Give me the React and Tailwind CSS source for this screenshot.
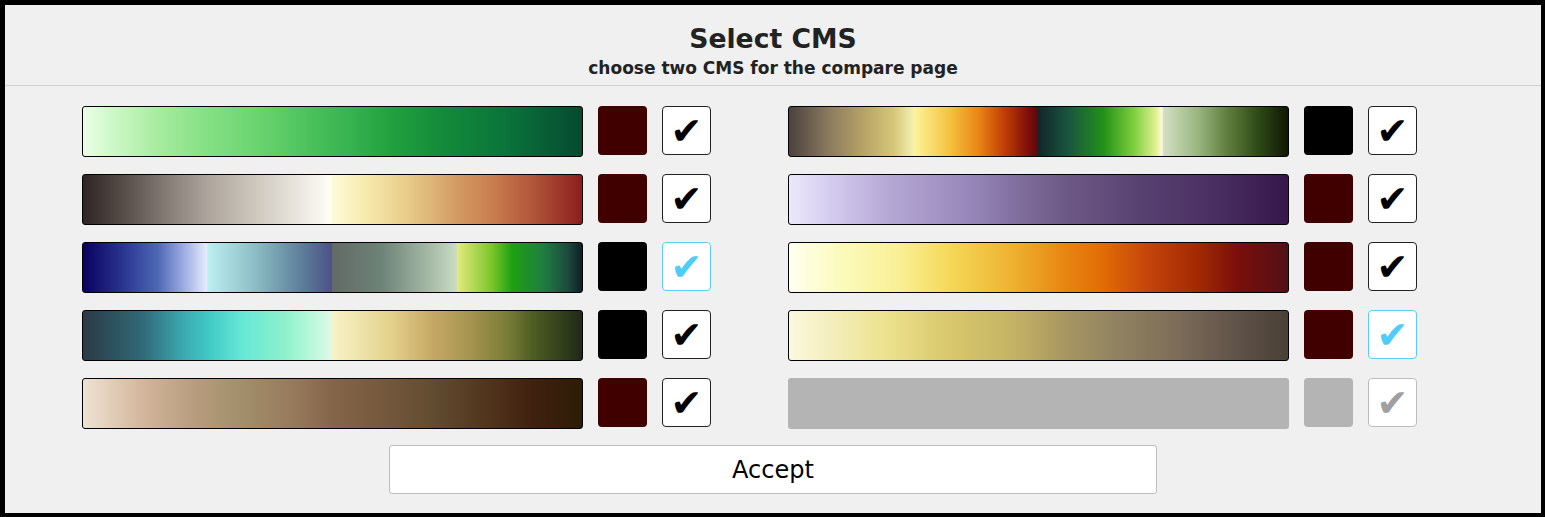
import React from 'react'

const FONT = { fontFamily: '"DejaVu Sans", "Liberation Sans", sans-serif' }

// left column, top to bottom
const LEFT = [
  {
    bar: 'bg-[linear-gradient(to_right,#ebffe6_0%,#d2f9cd_5%,#a7ec9f_15%,#84e085_25%,#6ad46f_35%,#4cc25d_45%,#33b04d_55%,#22a03f_62%,#138b3b_72%,#0a733b_85%,#064a30_100%)]',
    swatch: 'bg-[#400000]', state: 'on',
  },
  {
    bar: 'bg-[linear-gradient(to_right,#2e2624_0%,#564c48_8%,#8a827b_18%,#ada59c_25%,#cfc9bf_35%,#e9e6df_43%,#fffdf5_49.5%,#fffbd7_50%,#f4e6a6_58%,#e6c785_66%,#d39a63_75%,#c97e4f_82%,#b2563b_90%,#8c1e1e_100%)]',
    swatch: 'bg-[#400000]', state: 'on',
  },
  {
    bar: 'bg-[linear-gradient(to_right,#0a0060_0%,#2a3590_8%,#4e67b5_15%,#a9b7ea_21%,#e6ecfb_24.8%,#bceff0_25%,#8fc0c8_34%,#5d7d98_44%,#4c5288_49.8%,#636a66_50%,#6d8478_60%,#aabda9_70%,#c8dbc3_74.8%,#e2ea7c_75%,#7ac52a_82%,#1fa011_86%,#1e8040_92%,#1c4c40_97%,#0f1f22_100%)]',
    swatch: 'bg-black', state: 'focus',
  },
  {
    bar: 'bg-[linear-gradient(to_right,#2a3a45_0%,#306a78_12%,#3aa8b0_20%,#40c8c5_25%,#66e8d6_32%,#8cf0cc_40%,#b0f8d8_45%,#def9e8_49.8%,#f7f3c7_50%,#e3d08a_62%,#c7a865_70%,#a3924f_78%,#7a7c38_85%,#4e5e22_90%,#1f2a18_100%)]',
    swatch: 'bg-black', state: 'on',
  },
  {
    bar: 'bg-[linear-gradient(to_right,#eee3d3_0%,#d3b69b_12%,#b89d7f_22%,#a5926d_30%,#977a5c_42%,#85654a_50%,#75593d_60%,#624c30_70%,#4f331c_82%,#412010_90%,#2d1c05_100%)]',
    swatch: 'bg-[#400000]', state: 'on',
  },
]

// right column, top to bottom
const RIGHT = [
  {
    bar: 'bg-[linear-gradient(to_right,#4b423e_0%,#8b7a60_8%,#b7a367_15%,#d5c77a_21%,#f3eeb0_24.8%,#fbf59b_25%,#f5c442_32%,#e98614_38%,#c23f05_43%,#7e0e0b_48%,#5a0a0a_49.8%,#12262a_50%,#1a5540_56%,#239019_63%,#7dcd3c_69%,#e0f08e_73.5%,#fdfbe0_74.8%,#d2e0c4_75%,#9ab57f_82%,#5e7d3c_88%,#2f4a17_94%,#0f1704_100%)]',
    swatch: 'bg-black', state: 'on',
  },
  {
    bar: 'bg-[linear-gradient(to_right,#ebe8fa_0%,#d5cdef_8%,#b5a8d5_20%,#9a89bc_35%,#8270a0_45%,#6e5a86_55%,#584272_70%,#4a3062_85%,#37164b_100%)]',
    swatch: 'bg-[#400000]', state: 'on',
  },
  {
    bar: 'bg-[linear-gradient(to_right,#fffff0_0%,#fbfbbe_10%,#f9f095_22%,#f5d95a_32%,#eeb12f_45%,#e88711_55%,#e26b05_63%,#c4440a_72%,#a12a03_82%,#7a0e0b_90%,#511117_100%)]',
    swatch: 'bg-[#400000]', state: 'on',
  },
  {
    bar: 'bg-[linear-gradient(to_right,#fbf8de_0%,#ebe18c_20%,#d9c86c_32%,#c4b364_45%,#a99762_55%,#928461_65%,#7c6c58_78%,#5f5248_90%,#4a4036_100%)]',
    swatch: 'bg-[#400000]', state: 'focus',
  },
  { bar: null, swatch: 'bg-[#b4b4b4]', state: 'disabled' },
]

function CheckBox({ state }) {
  const box =
    state === 'focus'    ? 'border-[#5ccbf5] text-[#4fcdf9]' :
    state === 'disabled' ? 'border-[#bcbcbc] text-[#a0a0a0]' :
                           'border-[#222] text-black'
  return (
    <div className={`w-[49px] h-[49px] bg-white border rounded-[4px] flex items-center justify-center ${box}`}>
      <span className="text-[38px] leading-none" style={FONT}>✔</span>
    </div>
  )
}

function CmsRow({ bar, swatch, state }) {
  return (
    <div className="flex items-start gap-[15px]">
      {bar
        ? <div className={`w-[501px] h-[51px] border border-black rounded-[3px] ${bar}`} />
        : <div className="w-[501px] h-[51px] rounded-[3px] bg-[#b4b4b4]" />}
      <div className={`w-[49px] h-[49px] rounded-[4px] ${swatch}`} />
      <CheckBox state={state} />
    </div>
  )
}

export default function App() {
  return (
    <div
      className="h-[517px] w-full bg-[#f0f0f0] border-black border-t-[5px] border-l-[5px] border-r-4 border-b-4 flex flex-col text-[#222]"
      style={FONT}
    >
      {/* header */}
      <div className="pt-[18px] pb-[6px] border-b border-[#cfcfcf] text-center">
        <p className="text-[26.67px] leading-[32px] font-bold">Select CMS</p>
        <p className="mt-[3px] text-[17px] leading-[21px] font-bold">choose two CMS for the compare page</p>
      </div>

      {/* colour map grid */}
      <div className="pt-[20px] pl-[77px] grid grid-cols-[629px_629px] gap-x-[77px] gap-y-[17px]">
        {LEFT.map((row, i) => (
          <React.Fragment key={i}>
            <CmsRow {...row} />
            <CmsRow {...RIGHT[i]} />
          </React.Fragment>
        ))}
      </div>

      <div className="pt-[16px] flex justify-center">
        <button className="w-1/2 h-[49px] bg-white border border-[#bdbdbd] rounded-[3px] text-[24px] text-black">
          Accept
        </button>
      </div>
    </div>
  )
}
